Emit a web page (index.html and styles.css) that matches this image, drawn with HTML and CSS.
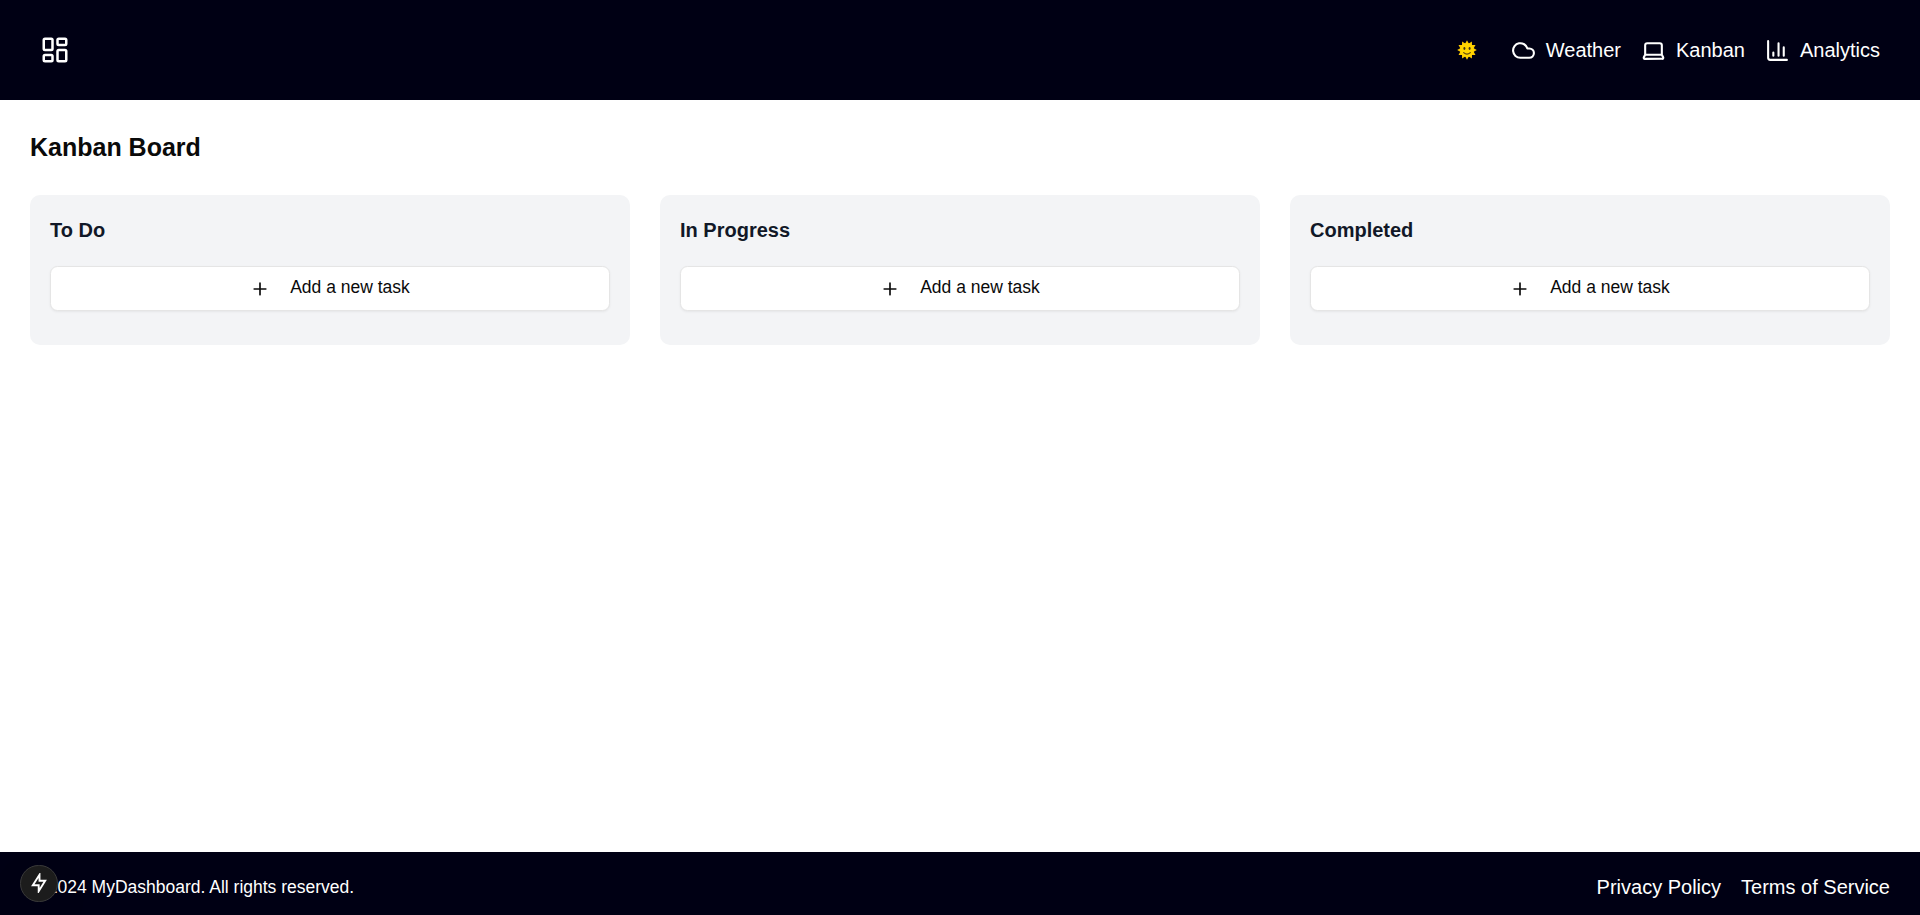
FILE: index.html
```html
<!DOCTYPE html>
<html lang="en">
<head>
<meta charset="utf-8">
<title>MyDashboard</title>
<link rel="stylesheet" href="styles.css">
</head>
<body>
<header class="header">
  <a class="logo"><svg class="icon icon-lg" viewBox="0 0 24 24"><rect width="7" height="9" x="3" y="3" rx="1"/><rect width="7" height="5" x="14" y="3" rx="1"/><rect width="7" height="9" x="14" y="12" rx="1"/><rect width="7" height="5" x="3" y="16" rx="1"/></svg></a>
  <nav class="nav">
    <svg class="sun" viewBox="-10 -10 20 20">
      <path fill="#fcc800" d="M0-9.8 1.8-6.5 4.9-8.5 5-4.9 8.5-4.9 6.7-1.8 9.8 0 6.7 1.8 8.5 4.9 5 4.9 4.9 8.5 1.8 6.5 0 9.8-1.8 6.5-4.9 8.5-5 4.9-8.5 4.9-6.7 1.8-9.8 0-6.7-1.8-8.5-4.9-5-4.9-4.9-8.5-1.8-6.5Z"/>
      <circle r="7" fill="#ffd500"/>
      <ellipse cx="-2.6" cy="-1.5" rx="1" ry="1.4" fill="#443514"/><ellipse cx="2.6" cy="-1.5" rx="1" ry="1.4" fill="#443514"/>
      <path d="M-3.3 2.6Q0 5.6 3.3 2.6" fill="none" stroke="#5c4310" stroke-width="1.2" stroke-linecap="round"/>
    </svg>
    <a class="nav-link"><svg class="icon icon-md" viewBox="0 0 24 24"><path d="M17.5 19H9a7 7 0 1 1 6.71-9h1.79a4.5 4.5 0 1 1 0 9Z"/></svg>Weather</a>
    <a class="nav-link"><svg class="icon icon-md" viewBox="0 0 24 24"><path d="M20 16V7a2 2 0 0 0-2-2H6a2 2 0 0 0-2 2v9m16 0H4m16 0 1.28 2.55a1 1 0 0 1-.9 1.45H3.62a1 1 0 0 1-.9-1.45L4 16"/></svg>Kanban</a>
    <a class="nav-link"><svg class="icon icon-md" viewBox="0 0 24 24"><path d="M3 3v16a2 2 0 0 0 2 2h16M18 17V9M13 17V5M8 17v-3"/></svg>Analytics</a>
  </nav>
</header>
<main class="main">
  <h1 class="title">Kanban Board</h1>
  <div class="board">
    <section class="column">
      <h2 class="column-title">To Do</h2>
      <button class="add"><svg class="icon icon-sm" viewBox="0 0 24 24"><path d="M5 12h14M12 5v14"/></svg><span class="add-label">Add a new task</span></button>
    </section>
    <section class="column">
      <h2 class="column-title">In Progress</h2>
      <button class="add"><svg class="icon icon-sm" viewBox="0 0 24 24"><path d="M5 12h14M12 5v14"/></svg><span class="add-label">Add a new task</span></button>
    </section>
    <section class="column">
      <h2 class="column-title">Completed</h2>
      <button class="add"><svg class="icon icon-sm" viewBox="0 0 24 24"><path d="M5 12h14M12 5v14"/></svg><span class="add-label">Add a new task</span></button>
    </section>
  </div>
</main>
<footer class="footer">
  <p class="copyright">© 2024 MyDashboard. All rights reserved.</p>
  <div class="footer-links"><a>Privacy Policy</a><a>Terms of Service</a></div>
</footer>
<div class="indicator"><svg class="bolt" viewBox="0 0 16 20"><path d="M8.5 1.8 1.8 12.3H7.7V18.2L14.2 7.7H8.5Z"/></svg></div>
</body>
</html>
```

FILE: styles.css
```css
* { box-sizing: border-box; }
body {
  margin: 0;
  min-height: 100vh;
  display: flex;
  flex-direction: column;
  font-family: "Liberation Sans", Arial, sans-serif;
  font-size: 20px;
  line-height: 30px;
  color: #0a0a0a;
  background: #fff;
}
h1, h2, p { margin: 0; }
.icon {
  display: block;
  flex: none;
  fill: none;
  stroke: currentColor;
  stroke-width: 2;
  stroke-linecap: round;
  stroke-linejoin: round;
}
.icon-lg { width: 30px; height: 30px; }
.icon-md { width: 25px; height: 25px; margin-top: 1px; }
.icon-sm { width: 20px; height: 20px; }
.header {
  height: 100px;
  padding: 0 40px;
  display: flex;
  align-items: center;
  justify-content: space-between;
  background: #000014;
  color: #fff;
}
.nav { display: flex; align-items: center; gap: 20px; }
.nav-link { display: flex; align-items: center; gap: 10px; }
.sun { width: 20px; height: 20px; margin-right: 14px; }
.main { flex: 1; padding: 30px; }
.title { font-size: 25px; line-height: 35px; font-weight: 700; margin-bottom: 30px; }
.board { display: grid; grid-template-columns: repeat(3, 1fr); gap: 30px; }
.column { height: 150px; padding: 20px; border-radius: 10px; background: #f3f4f6; }
.column-title { font-size: 20px; line-height: 30px; font-weight: 700; color: #111827; margin-bottom: 21px; }
.add {
  width: 100%;
  height: 45px;
  display: flex;
  align-items: center;
  justify-content: center;
  gap: 20px;
  padding: 0;
  border: 1px solid #e5e5e5;
  border-radius: 7.5px;
  background: #fff;
  box-shadow: 0 1px 2.5px rgba(0, 0, 0, .06);
  color: #0a0a0a;
  font: 17.5px/25px "Liberation Sans", Arial, sans-serif;
}
.add-label { padding-bottom: 2px; }
.footer {
  height: 63px;
  padding: 6px 30px 0;
  display: flex;
  align-items: center;
  justify-content: space-between;
  background: #000014;
  color: #fff;
}
.copyright { font-size: 17.5px; }
.footer-links { display: flex; gap: 20px; }
.indicator {
  position: fixed;
  left: 20px;
  bottom: 13px;
  width: 37.5px;
  height: 37.5px;
  display: flex;
  align-items: center;
  justify-content: center;
  border: 1px solid #3a3a3a;
  border-radius: 50%;
  background: #1c1c1c;
  box-shadow: 0 14px 40px rgba(0, 0, 0, .08);
}
.bolt { width: 16px; height: 20px; margin-bottom: 1px; fill: none; stroke: #fff; stroke-width: 1.9; stroke-linejoin: miter; }
```
